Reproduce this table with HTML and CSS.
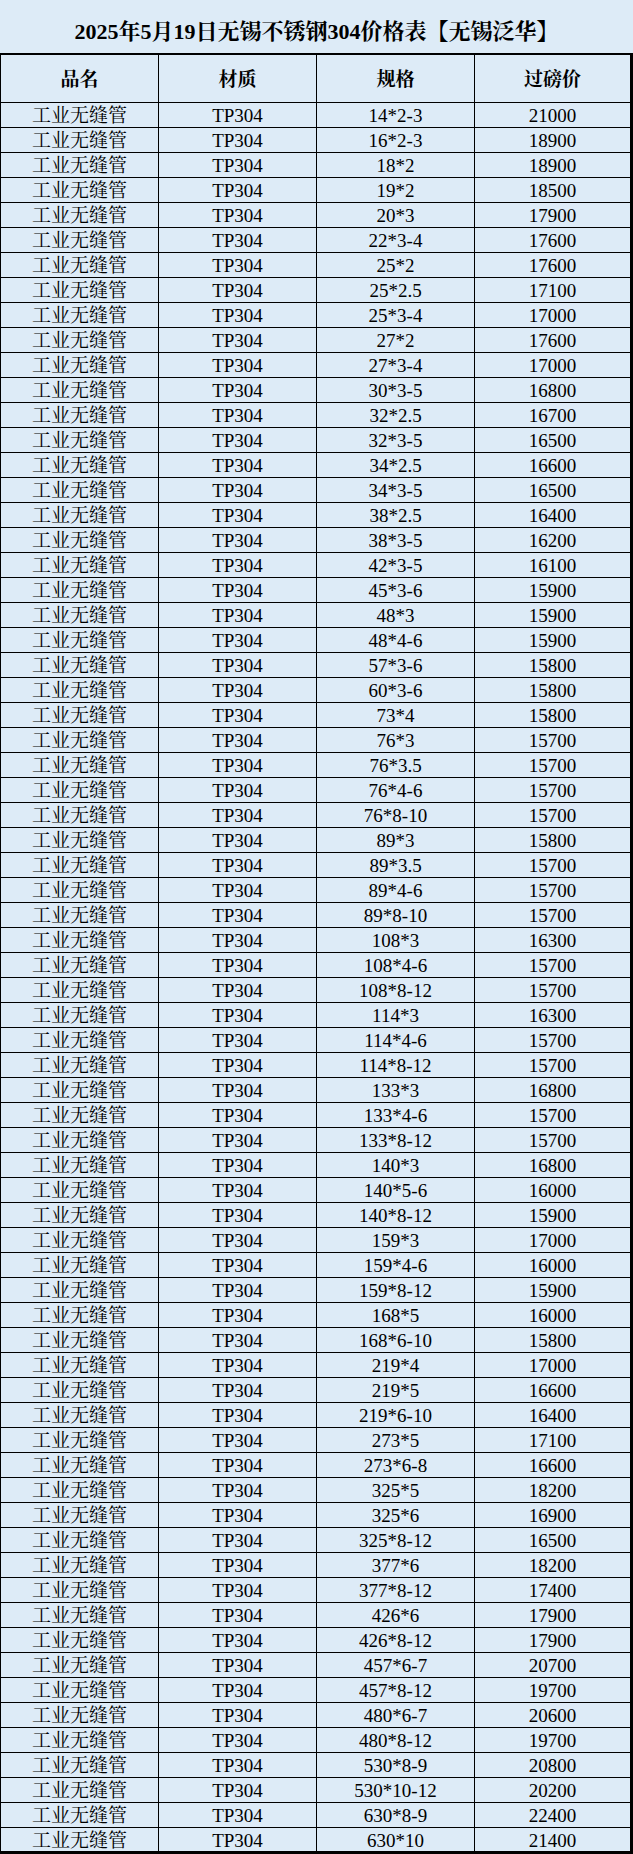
FILE: index.html
```html
<!DOCTYPE html>
<html lang="zh-CN">
<head>
<meta charset="utf-8">
<title>2025年5月19日无锡不锈钢304价格表</title>
<link rel="stylesheet" href="styles.css">
</head>
<body>
<div class="sheet">
  <div class="title">2025年5月19日无锡不锈钢304价格表【无锡泛华】</div>
  <div class="grid">
    <div class="row head"><div class="c">品名</div><div class="c">材质</div><div class="c">规格</div><div class="c">过磅价</div></div>
    <div class="row"><div class="c">工业无缝管</div><div class="c">TP304</div><div class="c">14*2-3</div><div class="c">21000</div></div>
    <div class="row"><div class="c">工业无缝管</div><div class="c">TP304</div><div class="c">16*2-3</div><div class="c">18900</div></div>
    <div class="row"><div class="c">工业无缝管</div><div class="c">TP304</div><div class="c">18*2</div><div class="c">18900</div></div>
    <div class="row"><div class="c">工业无缝管</div><div class="c">TP304</div><div class="c">19*2</div><div class="c">18500</div></div>
    <div class="row"><div class="c">工业无缝管</div><div class="c">TP304</div><div class="c">20*3</div><div class="c">17900</div></div>
    <div class="row"><div class="c">工业无缝管</div><div class="c">TP304</div><div class="c">22*3-4</div><div class="c">17600</div></div>
    <div class="row"><div class="c">工业无缝管</div><div class="c">TP304</div><div class="c">25*2</div><div class="c">17600</div></div>
    <div class="row"><div class="c">工业无缝管</div><div class="c">TP304</div><div class="c">25*2.5</div><div class="c">17100</div></div>
    <div class="row"><div class="c">工业无缝管</div><div class="c">TP304</div><div class="c">25*3-4</div><div class="c">17000</div></div>
    <div class="row"><div class="c">工业无缝管</div><div class="c">TP304</div><div class="c">27*2</div><div class="c">17600</div></div>
    <div class="row"><div class="c">工业无缝管</div><div class="c">TP304</div><div class="c">27*3-4</div><div class="c">17000</div></div>
    <div class="row"><div class="c">工业无缝管</div><div class="c">TP304</div><div class="c">30*3-5</div><div class="c">16800</div></div>
    <div class="row"><div class="c">工业无缝管</div><div class="c">TP304</div><div class="c">32*2.5</div><div class="c">16700</div></div>
    <div class="row"><div class="c">工业无缝管</div><div class="c">TP304</div><div class="c">32*3-5</div><div class="c">16500</div></div>
    <div class="row"><div class="c">工业无缝管</div><div class="c">TP304</div><div class="c">34*2.5</div><div class="c">16600</div></div>
    <div class="row"><div class="c">工业无缝管</div><div class="c">TP304</div><div class="c">34*3-5</div><div class="c">16500</div></div>
    <div class="row"><div class="c">工业无缝管</div><div class="c">TP304</div><div class="c">38*2.5</div><div class="c">16400</div></div>
    <div class="row"><div class="c">工业无缝管</div><div class="c">TP304</div><div class="c">38*3-5</div><div class="c">16200</div></div>
    <div class="row"><div class="c">工业无缝管</div><div class="c">TP304</div><div class="c">42*3-5</div><div class="c">16100</div></div>
    <div class="row"><div class="c">工业无缝管</div><div class="c">TP304</div><div class="c">45*3-6</div><div class="c">15900</div></div>
    <div class="row"><div class="c">工业无缝管</div><div class="c">TP304</div><div class="c">48*3</div><div class="c">15900</div></div>
    <div class="row"><div class="c">工业无缝管</div><div class="c">TP304</div><div class="c">48*4-6</div><div class="c">15900</div></div>
    <div class="row"><div class="c">工业无缝管</div><div class="c">TP304</div><div class="c">57*3-6</div><div class="c">15800</div></div>
    <div class="row"><div class="c">工业无缝管</div><div class="c">TP304</div><div class="c">60*3-6</div><div class="c">15800</div></div>
    <div class="row"><div class="c">工业无缝管</div><div class="c">TP304</div><div class="c">73*4</div><div class="c">15800</div></div>
    <div class="row"><div class="c">工业无缝管</div><div class="c">TP304</div><div class="c">76*3</div><div class="c">15700</div></div>
    <div class="row"><div class="c">工业无缝管</div><div class="c">TP304</div><div class="c">76*3.5</div><div class="c">15700</div></div>
    <div class="row"><div class="c">工业无缝管</div><div class="c">TP304</div><div class="c">76*4-6</div><div class="c">15700</div></div>
    <div class="row"><div class="c">工业无缝管</div><div class="c">TP304</div><div class="c">76*8-10</div><div class="c">15700</div></div>
    <div class="row"><div class="c">工业无缝管</div><div class="c">TP304</div><div class="c">89*3</div><div class="c">15800</div></div>
    <div class="row"><div class="c">工业无缝管</div><div class="c">TP304</div><div class="c">89*3.5</div><div class="c">15700</div></div>
    <div class="row"><div class="c">工业无缝管</div><div class="c">TP304</div><div class="c">89*4-6</div><div class="c">15700</div></div>
    <div class="row"><div class="c">工业无缝管</div><div class="c">TP304</div><div class="c">89*8-10</div><div class="c">15700</div></div>
    <div class="row"><div class="c">工业无缝管</div><div class="c">TP304</div><div class="c">108*3</div><div class="c">16300</div></div>
    <div class="row"><div class="c">工业无缝管</div><div class="c">TP304</div><div class="c">108*4-6</div><div class="c">15700</div></div>
    <div class="row"><div class="c">工业无缝管</div><div class="c">TP304</div><div class="c">108*8-12</div><div class="c">15700</div></div>
    <div class="row"><div class="c">工业无缝管</div><div class="c">TP304</div><div class="c">114*3</div><div class="c">16300</div></div>
    <div class="row"><div class="c">工业无缝管</div><div class="c">TP304</div><div class="c">114*4-6</div><div class="c">15700</div></div>
    <div class="row"><div class="c">工业无缝管</div><div class="c">TP304</div><div class="c">114*8-12</div><div class="c">15700</div></div>
    <div class="row"><div class="c">工业无缝管</div><div class="c">TP304</div><div class="c">133*3</div><div class="c">16800</div></div>
    <div class="row"><div class="c">工业无缝管</div><div class="c">TP304</div><div class="c">133*4-6</div><div class="c">15700</div></div>
    <div class="row"><div class="c">工业无缝管</div><div class="c">TP304</div><div class="c">133*8-12</div><div class="c">15700</div></div>
    <div class="row"><div class="c">工业无缝管</div><div class="c">TP304</div><div class="c">140*3</div><div class="c">16800</div></div>
    <div class="row"><div class="c">工业无缝管</div><div class="c">TP304</div><div class="c">140*5-6</div><div class="c">16000</div></div>
    <div class="row"><div class="c">工业无缝管</div><div class="c">TP304</div><div class="c">140*8-12</div><div class="c">15900</div></div>
    <div class="row"><div class="c">工业无缝管</div><div class="c">TP304</div><div class="c">159*3</div><div class="c">17000</div></div>
    <div class="row"><div class="c">工业无缝管</div><div class="c">TP304</div><div class="c">159*4-6</div><div class="c">16000</div></div>
    <div class="row"><div class="c">工业无缝管</div><div class="c">TP304</div><div class="c">159*8-12</div><div class="c">15900</div></div>
    <div class="row"><div class="c">工业无缝管</div><div class="c">TP304</div><div class="c">168*5</div><div class="c">16000</div></div>
    <div class="row"><div class="c">工业无缝管</div><div class="c">TP304</div><div class="c">168*6-10</div><div class="c">15800</div></div>
    <div class="row"><div class="c">工业无缝管</div><div class="c">TP304</div><div class="c">219*4</div><div class="c">17000</div></div>
    <div class="row"><div class="c">工业无缝管</div><div class="c">TP304</div><div class="c">219*5</div><div class="c">16600</div></div>
    <div class="row"><div class="c">工业无缝管</div><div class="c">TP304</div><div class="c">219*6-10</div><div class="c">16400</div></div>
    <div class="row"><div class="c">工业无缝管</div><div class="c">TP304</div><div class="c">273*5</div><div class="c">17100</div></div>
    <div class="row"><div class="c">工业无缝管</div><div class="c">TP304</div><div class="c">273*6-8</div><div class="c">16600</div></div>
    <div class="row"><div class="c">工业无缝管</div><div class="c">TP304</div><div class="c">325*5</div><div class="c">18200</div></div>
    <div class="row"><div class="c">工业无缝管</div><div class="c">TP304</div><div class="c">325*6</div><div class="c">16900</div></div>
    <div class="row"><div class="c">工业无缝管</div><div class="c">TP304</div><div class="c">325*8-12</div><div class="c">16500</div></div>
    <div class="row"><div class="c">工业无缝管</div><div class="c">TP304</div><div class="c">377*6</div><div class="c">18200</div></div>
    <div class="row"><div class="c">工业无缝管</div><div class="c">TP304</div><div class="c">377*8-12</div><div class="c">17400</div></div>
    <div class="row"><div class="c">工业无缝管</div><div class="c">TP304</div><div class="c">426*6</div><div class="c">17900</div></div>
    <div class="row"><div class="c">工业无缝管</div><div class="c">TP304</div><div class="c">426*8-12</div><div class="c">17900</div></div>
    <div class="row"><div class="c">工业无缝管</div><div class="c">TP304</div><div class="c">457*6-7</div><div class="c">20700</div></div>
    <div class="row"><div class="c">工业无缝管</div><div class="c">TP304</div><div class="c">457*8-12</div><div class="c">19700</div></div>
    <div class="row"><div class="c">工业无缝管</div><div class="c">TP304</div><div class="c">480*6-7</div><div class="c">20600</div></div>
    <div class="row"><div class="c">工业无缝管</div><div class="c">TP304</div><div class="c">480*8-12</div><div class="c">19700</div></div>
    <div class="row"><div class="c">工业无缝管</div><div class="c">TP304</div><div class="c">530*8-9</div><div class="c">20800</div></div>
    <div class="row"><div class="c">工业无缝管</div><div class="c">TP304</div><div class="c">530*10-12</div><div class="c">20200</div></div>
    <div class="row"><div class="c">工业无缝管</div><div class="c">TP304</div><div class="c">630*8-9</div><div class="c">22400</div></div>
    <div class="row last"><div class="c">工业无缝管</div><div class="c">TP304</div><div class="c">630*10</div><div class="c">21400</div></div>
  </div>
</div>
</body>
</html>
```

FILE: styles.css
```css
* { box-sizing: border-box; }
html, body { margin: 0; padding: 0; background: #ddebf7; }
.sheet {
  width: 633px;
  background: #ddebf7;
  color: #000;
  font-family: "Liberation Serif", "Noto Serif CJK SC", "Noto Sans CJK SC", serif;
}
.title {
  height: 53px;
  display: flex;
  align-items: center;
  justify-content: center;
  padding-top: 5px;
  font-size: 22px;
  font-weight: bold;
  white-space: nowrap;
}
.grid {
  border-top: 2px solid #000;
  border-left: 1px solid #000;
  border-right: 3px solid #000;
  border-bottom: 3px solid #000;
}
.row {
  display: grid;
  grid-template-columns: 158px 158px 158px 155px;
  height: 25px;
  border-bottom: 1px solid #000;
  font-size: 19px;
  line-height: 24px;
}
.row.head {
  height: 48px;
  line-height: 47px;
  font-weight: bold;
}
.row.last {
  height: 23px;
  line-height: 23px;
  border-bottom: none;
}
.c {
  text-align: center;
  white-space: nowrap;
  border-right: 1px solid #000;
  padding-top: 1px;
}
.c:last-child { border-right: none; }
```
